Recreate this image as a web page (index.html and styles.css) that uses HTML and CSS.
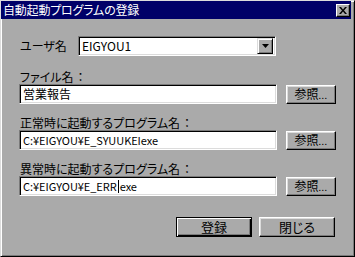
FILE: index.html
```html
<!DOCTYPE html>
<html lang="ja">
<head>
  <meta charset="UTF-8" />
  <title>自動起動プログラムの登録</title>
  <link rel="stylesheet" href="styles.css">
</head>
<body>
  <div class="window">
    <div class="titlebar">
      <span class="title">自動起動プログラムの登録</span>
      <span class="close-btn">
        <svg width="8" height="7" viewBox="0 0 8 7"><path d="M0 0h2l2 2.5 2-2.5h2l-3 3.5 3 3.5h-2l-2-2.5-2 2.5h-2l3-3.5z" fill="#000"/></svg>
      </span>
    </div>

    <div class="content">
      <div class="user-row">
        <span class="label user-label">ユーザ名</span>
        <div class="combo">
          <span class="combo-value">EIGYOU1</span>
          <span class="combo-btn">
            <svg width="7" height="4" viewBox="0 0 7 4"><path d="M0 0h7l-3.5 4z" fill="#000"/></svg>
          </span>
        </div>
      </div>

      <div class="group">
        <div class="label">ファイル名<span class="colon">：</span></div>
        <div class="field-row">
          <div class="field">営業報告</div>
          <button class="btn browse">参照<span class="dots">...</span></button>
        </div>
      </div>

      <div class="group">
        <div class="label">正常時に起動するプログラム名<span class="colon">：</span></div>
        <div class="field-row">
          <div class="field path">C:¥EIGYOU¥E_SYUUKEIexe</div>
          <button class="btn browse">参照<span class="dots">...</span></button>
        </div>
      </div>

      <div class="group">
        <div class="label">異常時に起動するプログラム名<span class="colon">：</span></div>
        <div class="field-row">
          <div class="field path">C:¥EIGYOU¥E_ERR<span class="caret"></span>exe</div>
          <button class="btn browse">参照<span class="dots">...</span></button>
        </div>
      </div>

      <div class="actions">
        <button class="btn action default">登録</button>
        <button class="btn action">閉じる</button>
      </div>
    </div>
  </div>
</body>
</html>
```

FILE: styles.css
```css
:root {
  --face: #aaaaaa;
  --navy: #000068;
  --shadow: #7a7a7a;
  --light: #dcdcdc;
}
* {
  margin: 0;
  padding: 0;
  box-sizing: border-box;
}
body {
  background: var(--face);
  font-family: "Noto Sans CJK JP", "Liberation Sans", sans-serif;
  font-size: 12px;
  font-feature-settings: "palt";
  color: #000;
}
.window {
  width: 355px;
  height: 257px;
  background: var(--face);
  border: 1px solid;
  border-color: var(--light) #000 #000 var(--light);
  box-shadow: inset 1px 1px #fff, inset -1px -1px var(--shadow);
  padding: 0 3px 2px 0;
}
.titlebar {
  height: 18px;
  background: var(--navy);
  display: flex;
  align-items: center;
  justify-content: space-between;
  padding: 0 1px 0 2px;
}
.title {
  color: #fff;
  font-size: 12px;
  line-height: 18px;
  letter-spacing: -0.2px;
}
.close-btn {
  width: 14px;
  height: 13px;
  background: var(--face);
  border: 1px solid;
  border-color: #fff #000 #000 #fff;
  box-shadow: inset -1px -1px var(--shadow);
  display: flex;
  align-items: center;
  justify-content: center;
}
.content {
  padding: 17px 0 0 18px;
}
.label {
  line-height: 14px;
  height: 14px;
  padding-left: 1px;
}
.colon {
  font-feature-settings: normal;
  margin-left: 1px;
}
.user-row {
  display: flex;
  align-items: center;
  height: 20px;
}
.user-label {
  width: 59px;
  height: auto;
}
.combo {
  width: 198px;
  height: 20px;
  background: #fff;
  border: 1px solid;
  border-color: var(--shadow) #fff #fff var(--shadow);
  box-shadow: inset 1px 1px #000, inset -1px -1px var(--light);
  display: flex;
  align-items: center;
  justify-content: space-between;
  padding: 2px;
}
.combo-value {
  padding-left: 1px;
  line-height: 16px;
}
.combo-btn {
  width: 16px;
  height: 16px;
  background: var(--face);
  border: 1px solid;
  border-color: var(--light) #000 #000 var(--light);
  box-shadow: inset 1px 1px #fff, inset -1px -1px var(--shadow);
  display: flex;
  align-items: center;
  justify-content: center;
}
.group {
  margin-top: 14px;
}
.group + .group {
  margin-top: 12px;
}
.field-row {
  display: flex;
  align-items: center;
  gap: 9px;
}
.field {
  width: 258px;
  height: 20px;
  background: #fff;
  border: 1px solid;
  border-color: var(--shadow) #fff #fff var(--shadow);
  box-shadow: inset 1px 1px #000, inset -1px -1px var(--light);
  padding: 0 3px;
  line-height: 18px;
  white-space: nowrap;
  overflow: hidden;
}
.path {
  font-size: 11px;
  letter-spacing: -0.05px;
}
.caret {
  display: inline-block;
  width: 1px;
  height: 13px;
  background: #000;
  vertical-align: -2px;
  margin: 0 1px;
}
.btn {
  font-family: inherit;
  font-size: 12px;
  font-feature-settings: "palt";
  color: #000;
  background: var(--face);
  border: 1px solid;
  border-color: #fff #000 #000 #fff;
  box-shadow: inset -1px -1px var(--shadow), inset 1px 1px var(--light);
  cursor: pointer;
}
.browse {
  width: 50px;
  height: 19px;
  line-height: 15px;
}
.dots {
  font-size: 9px;
  letter-spacing: 0.5px;
}
.actions {
  display: flex;
  justify-content: flex-end;
  gap: 7px;
  margin-top: 21px;
  padding-right: 16px;
}
.action {
  width: 76px;
  height: 20px;
  font-size: 13px;
  line-height: 16px;
}
.default {
  border: 1px solid #000;
  box-shadow: inset 1px 1px #fff, inset -1px -1px #000, inset -2px -2px var(--shadow);
}
```
